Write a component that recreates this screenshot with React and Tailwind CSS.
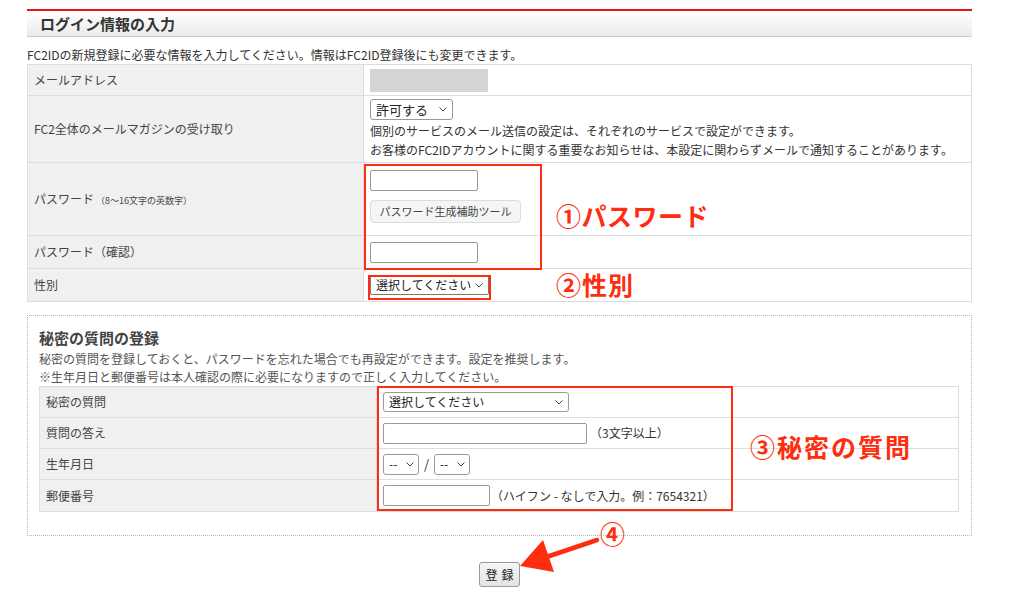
import React from "react";

const RED = "#ff2d0f";

function Chevron() {
  return (
    <svg width="8" height="5" viewBox="0 0 8 5" className="shrink-0">
      <path d="M0.5 0.5 L4 4 L7.5 0.5" stroke="#444" fill="none" strokeWidth="1" />
    </svg>
  );
}

function Row({ label, h, children, last }) {
  return (
    <div className={`flex ${h} ${last ? "" : "border-b border-[#dddddd]"}`}>
      <div className="w-[336px] shrink-0 bg-[#f0f0f0] border-r border-[#dddddd] flex items-center pl-[6px] text-[12px] text-[#444]">
        {label}
      </div>
      <div className="flex-1 pl-[6px] flex flex-col justify-center">{children}</div>
    </div>
  );
}

function SRow({ label, children, last }) {
  return (
    <div className={`flex h-[31px] ${last ? "" : "border-b border-[#dddddd]"}`}>
      <div className="w-[337px] shrink-0 bg-[#f0f0f0] border-r border-[#dddddd] flex items-center pl-[6px] text-[12px] text-[#444]">
        {label}
      </div>
      <div className="flex-1 pl-[6px] flex items-center">{children}</div>
    </div>
  );
}

export default function App() {
  return (
    <div className="relative w-[1024px] h-[604px] bg-white overflow-hidden font-['Noto_Sans_CJK_JP','Noto_Sans',sans-serif] text-[#333]">
      <div className="pt-[9px] ml-[27px] w-[945px]">
        {/* header */}
        <div className="border-t-2 border-[#e8101c]">
          <div className="h-[26px] bg-gradient-to-b from-white to-[#ebebeb] border-b border-[#cccccc] pl-[13px] flex items-center">
            <span className="text-[15px] font-bold leading-none text-[#333]">ログイン情報の入力</span>
          </div>
        </div>
        <p className="mt-[9px] text-[12px] leading-[18px] text-[#333]">
          FC2IDの新規登録に必要な情報を入力してください。情報はFC2ID登録後にも変更できます。
        </p>

        {/* main table */}
        <div className="border border-[#dddddd]">
          <Row label="メールアドレス" h="h-[31px]">
            <div className="w-[118px] h-[23px] bg-[#d4d4d4]" />
          </Row>
          <Row label="FC2全体のメールマガジンの受け取り" h="h-[67px]">
            <div className="flex items-center justify-between w-[83px] h-[21px] border border-[#999] rounded-[3px] bg-white pl-[5px] pr-[5px] text-[13px] leading-none text-[#222] whitespace-nowrap">
              <span>許可する</span>
              <Chevron />
            </div>
            <div className="text-[12px] leading-[19px] text-[#333] mt-[1px]">
              個別のサービスのメール送信の設定は、それぞれのサービスで設定ができます。
            </div>
            <div className="text-[12px] leading-[19px] text-[#333]">
              お客様のFC2IDアカウントに関する重要なお知らせは、本設定に関わらずメールで通知することがあります。
            </div>
          </Row>
          <Row
            label={
              <span className="whitespace-nowrap">
                パスワード<span className="text-[9px] leading-none ml-[2px]">（8〜16文字の英数字）</span>
              </span>
            }
            h="h-[73px]"
          >
            <div className="flex flex-col gap-[9px] -mt-[6px]">
              <div className="w-[108px] h-[21px] border border-[#999] rounded-[2px] bg-white" />
              <div className="w-[151px] h-[23px] border border-[#dcdcdc] rounded-[4px] bg-[#f5f5f5] flex items-center justify-center text-[11px] leading-none text-[#444] whitespace-nowrap">
                パスワード生成補助ツール
              </div>
            </div>
          </Row>
          <Row label="パスワード（確認）" h="h-[33px]">
            <div className="w-[108px] h-[21px] border border-[#999] rounded-[2px] bg-white" />
          </Row>
          <Row label="性別" h="h-[32px]" last>
            <div className="flex items-center justify-between w-[119px] h-[20px] border border-[#777] rounded-[2px] bg-white pl-[5px] pr-[5px] text-[12px] leading-none text-[#222] whitespace-nowrap">
              <span>選択してください</span>
              <Chevron />
            </div>
          </Row>
        </div>

        {/* secret question */}
        <div className="mt-[13px] border border-dotted border-[#b5b5b5] pl-[11px] pr-[12px] pt-[12px] pb-[23px]">
          <div className="text-[15px] font-bold leading-[20px] text-[#444]">秘密の質問の登録</div>
          <div className="mt-[2px] text-[12px] leading-[18px] text-[#555]">
            秘密の質問を登録しておくと、パスワードを忘れた場合でも再設定ができます。設定を推奨します。
          </div>
          <div className="text-[12px] leading-[18px] h-[18px] text-[#555] whitespace-nowrap overflow-hidden">
            ※生年月日と郵便番号は本人確認の際に必要になりますので正しく入力してください。
          </div>
          <div className="border border-[#dddddd]">
            <SRow label="秘密の質問">
              <div className="flex items-center justify-between w-[186px] h-[20px] border border-[#999] rounded-[3px] bg-white pl-[5px] pr-[5px] text-[12px] leading-none text-[#222] whitespace-nowrap">
                <span>選択してください</span>
                <Chevron />
              </div>
            </SRow>
            <SRow label="質問の答え">
              <div className="w-[204px] h-[21px] border border-[#999] rounded-[2px] bg-white" />
              <span className="ml-[3px] text-[12px] text-[#333]">（3文字以上）</span>
            </SRow>
            <SRow label="生年月日">
              <div className="flex items-center justify-between w-[36px] h-[21px] border border-[#999] rounded-[3px] bg-white pl-[5px] pr-[4px] text-[12px] leading-none text-[#222]">
                <span>--</span>
                <Chevron />
              </div>
              <span className="mx-[5px] text-[13px] text-[#333]">/</span>
              <div className="flex items-center justify-between w-[36px] h-[21px] border border-[#999] rounded-[3px] bg-white pl-[5px] pr-[4px] text-[12px] leading-none text-[#222]">
                <span>--</span>
                <Chevron />
              </div>
            </SRow>
            <SRow label="郵便番号" last>
              <div className="w-[107px] h-[21px] border border-[#999] rounded-[2px] bg-white" />
              <span className="ml-[1px] text-[12px] text-[#333]">（ハイフン - なしで入力。例：7654321）</span>
            </SRow>
          </div>
        </div>

        <div className="mt-[26px] flex justify-center">
          <div className="w-[41px] h-[25px] border border-[#999] rounded-[3px] bg-gradient-to-b from-[#f6f6f6] to-[#e4e4e4] flex items-center justify-center text-[12px] leading-none text-[#222] tracking-[4px] pl-[4px]">
            登録
          </div>
        </div>
      </div>

      {/* annotations */}
      <div className="absolute left-[364px] top-[164px] w-[178px] h-[106px] border-2" style={{ borderColor: RED }} />
      <div className="absolute left-[368px] top-[275px] w-[123px] h-[25px] border-2" style={{ borderColor: RED }} />
      <div className="absolute left-[377px] top-[386px] w-[356px] h-[125px] border-2" style={{ borderColor: RED }} />

      <div className="absolute left-[556px] top-[200px] text-[25px] font-bold leading-[30px] tracking-[0.5px] text-[#ff2d0f]">①パスワード</div>
      <div className="absolute left-[556px] top-[269px] text-[25px] font-bold leading-[30px] tracking-[1px] text-[#ff2d0f]">②性別</div>
      <div className="absolute left-[750px] top-[431px] text-[25px] font-bold leading-[30px] tracking-[2px] text-[#ff2d0f]">③秘密の質問</div>
      <div className="absolute left-[600px] top-[518px] text-[25px] font-bold leading-[30px] text-[#ff2d0f]">④</div>

      <svg className="absolute left-0 top-0 pointer-events-none" width="1024" height="604">
        <line x1="597" y1="540" x2="545" y2="557.5" stroke={RED} strokeWidth="4.5" strokeLinecap="round" />
        <polygon points="520,566 543,540 554,572" fill={RED} />
      </svg>
    </div>
  );
}
